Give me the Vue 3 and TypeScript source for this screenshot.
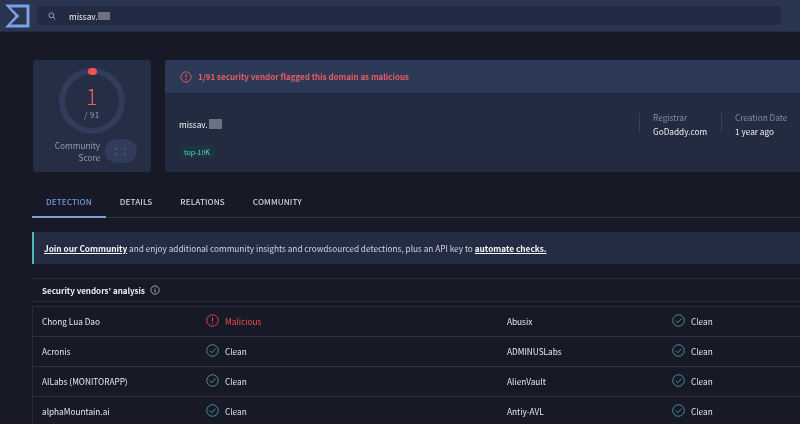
<script setup lang="ts">
interface Vendor { name: string; verdict: string }
const rows: [Vendor, Vendor][] = [
  [{ name: 'Chong Lua Dao', verdict: 'Malicious' }, { name: 'Abusix', verdict: 'Clean' }],
  [{ name: 'Acronis', verdict: 'Clean' }, { name: 'ADMINUSLabs', verdict: 'Clean' }],
  [{ name: 'AILabs (MONITORAPP)', verdict: 'Clean' }, { name: 'AlienVault', verdict: 'Clean' }],
  [{ name: 'alphaMountain.ai', verdict: 'Clean' }, { name: 'Antiy-AVL', verdict: 'Clean' }],
]
const tabs = ['DETECTION', 'DETAILS', 'RELATIONS', 'COMMUNITY']
</script>

<template>
  <div class="page">
    <header class="topbar">
      <svg class="logo" viewBox="0 0 26 24" width="26" height="24">
        <path d="M1 .5H25.500V23.500H1L11.500 12Z M6.500 3.500H22.500V20.500H6.500L15.500 12Z" fill="#7ba2e6" fill-rule="evenodd" />
      </svg>
      <div class="search">
        <svg viewBox="0 0 12 12" width="8" height="8" class="search-icon">
          <circle cx="5" cy="5" r="3.6" fill="none" stroke="#a9b2c4" stroke-width="1.3" />
          <path d="M7.800 7.800L11 11" stroke="#a9b2c4" stroke-width="1.4" />
        </svg>
        <span class="search-text">missav.</span><span class="mask search-mask"></span>
      </div>
    </header>

    <main class="content">
      <section class="summary">
        <div class="score-card">
          <div class="ring">
            <svg viewBox="0 0 66 66" width="66" height="66" class="ring-svg">
              <circle cx="33" cy="33" r="30" fill="none" stroke="#303c59" stroke-width="6" />
              <rect x="29" y="0" width="9" height="7" rx="3.500" fill="#f0524e" />
            </svg>
            <div class="ring-num">1</div>
            <div class="ring-total">/ 91</div>
          </div>
          <div class="community">
            <div class="community-label">Community<br />Score</div>
            <div class="community-pill"><i></i><i></i><i></i><i></i></div>
          </div>
        </div>

        <div class="info-card">
          <div class="alert">
            <svg viewBox="0 0 14 14" width="12" height="12">
              <circle cx="7" cy="7" r="6" fill="none" stroke="#e5545b" stroke-width="1.100" />
              <path d="M7 3.500V8" stroke="#e5545b" stroke-width="1.200" />
              <circle cx="7" cy="10" r=".8" fill="#e5545b" />
            </svg>
            <span>1/91 security vendor flagged this domain as malicious</span>
          </div>
          <div class="info-body">
            <div class="domain-col">
              <div class="domain"><span>missav.</span><span class="mask domain-mask"></span></div>
              <span class="tag">top-10K</span>
            </div>
            <div class="meta-wrap">
              <div class="meta">
                <div class="meta-label">Registrar</div>
                <div class="meta-value">GoDaddy.com</div>
              </div>
              <div class="meta">
                <div class="meta-label">Creation Date</div>
                <div class="meta-value">1 year ago</div>
              </div>
            </div>
          </div>
        </div>
      </section>

      <nav class="tabs">
        <div v-for="(t, i) in tabs" :key="t" class="tab" :class="{ active: i === 0 }">{{ t }}</div>
      </nav>

      <div class="banner">
        <a class="strong">Join our Community</a> and enjoy additional community insights and crowdsourced detections, plus an API key to <a class="strong">automate checks.</a>
      </div>

      <div class="section-head">
        <span>Security vendors' analysis</span>
        <svg viewBox="0 0 12 12" width="10" height="10">
          <circle cx="6" cy="6" r="5" fill="none" stroke="#c9ced8" stroke-width=".9" />
          <path d="M6 5.400V9" stroke="#c9ced8" stroke-width="1" />
          <circle cx="6" cy="3.600" r=".6" fill="#c9ced8" />
        </svg>
      </div>

      <div class="table">
        <div v-for="(row, r) in rows" :key="r" class="row">
          <template v-for="v in row" :key="v.name">
            <div class="vendor">{{ v.name }}</div>
            <div class="verdict" :class="{ bad: v.verdict === 'Malicious' }">
              <svg v-if="v.verdict === 'Malicious'" viewBox="0 0 14 14" width="13" height="13">
                <circle cx="7" cy="7" r="6.200" fill="none" stroke="#e5464e" stroke-width="1" />
                <path d="M7 3.400V8" stroke="#e5464e" stroke-width="1.100" />
                <circle cx="7" cy="10" r=".7" fill="#e5464e" />
              </svg>
              <svg v-else viewBox="0 0 14 14" width="13" height="13">
                <circle cx="7" cy="7" r="6.200" fill="none" stroke="#4f9c98" stroke-width="1" />
                <path d="M4 7.200L6.200 9.400L10.200 5" fill="none" stroke="#4f9c98" stroke-width="1" />
              </svg>
              <span>{{ v.verdict }}</span>
            </div>
          </template>
        </div>
      </div>
    </main>
  </div>
</template>

<style>
html, body { margin: 0; background: #181a28; }
</style>

<style scoped>
.page {
  width: 800px;
  height: 424px;
  overflow: hidden;
  background: #171926;
  color: #e6e8ee;
  font-family: "Noto Sans CJK SC", "Noto Sans", sans-serif;
  font-size: 8.25px;
  filter: blur(.3px);
}
.topbar {
  height: 32px;
  box-sizing: border-box;
  background: #2a3550;
  border-bottom: 1px solid #222a41;
  display: flex;
  align-items: center;
  padding: 0 19px 0 4px;
  gap: 7px;
}
.logo { flex: none; }
.search {
  flex: 1;
  height: 19px;
  background: #222b42;
  border-radius: 3px;
  display: flex;
  align-items: center;
  padding-left: 11px;
  color: #f0f2f6;
  font-size: 8.25px;
}
.search-icon { margin-right: 13px; }
.search-mask { width: 12px; height: 8px; }
.mask { display: inline-block; background: #6b7282; }
.content { padding: 28px 0 0 32px; }
.summary { display: flex; gap: 14px; height: 112px; margin-left: 1px; }
.score-card {
  width: 118px;
  flex: none;
  background: #252e45;
  border-radius: 3px;
  box-sizing: border-box;
  padding-top: 8px;
  display: flex;
  flex-direction: column;
  align-items: center;
}
.ring { width: 66px; height: 66px; position: relative; text-align: center; }
.ring-svg { position: absolute; left: 0; top: 0; }
.ring-num { position: relative; padding-top: 16px; font-size: 22px; line-height: 22px; color: #e8615d; font-weight: 300; }
.ring-total { position: relative; font-size: 8px; line-height: 11px; margin-top: 3px; color: #969db0; letter-spacing: .4px; }
.community { display: flex; align-items: center; margin-top: 5px; margin-left: 8px; gap: 5px; }
.community-label { text-align: right; font-size: 8.25px; line-height: 12px; color: #939bb0; white-space: nowrap; }
.community-pill {
  width: 32px; height: 24px; border-radius: 12px; background: #303c59;
  display: grid; grid-template-columns: 4px 4px; gap: 3px 5px; align-content: center; justify-content: center;
}
.community-pill i { width: 2px; height: 2px; border-radius: 50%; background: #4c5b7c; }
.info-card {
  flex: 1;
  background: #232b40;
  border-radius: 3px 0 0 3px;
  display: flex;
  flex-direction: column;
}
.alert {
  height: 34px;
  flex: none;
  box-sizing: border-box;
  background: #2c3a58;
  border-bottom: 1px solid #202841;
  border-radius: 3px 0 0 0;
  display: flex;
  align-items: center;
  padding-left: 15px;
  gap: 6px;
  color: #ee5a61;
  font-size: 8px;
  font-weight: 700;
}
.info-body { flex: 1; display: flex; justify-content: space-between; }
.domain-col { padding: 23px 0 0 14px; }
.domain { display: flex; align-items: center; font-size: 8.25px; line-height: 14px; color: #f2f4f8; gap: 1px; }
.domain-mask { width: 13px; height: 10px; }
.tag {
  display: inline-block;
  margin-top: 15px;
  padding: 1px 5px;
  border-radius: 3px;
  background: #1a3540;
  color: #5fd3bf;
  font-size: 7px;
  line-height: 10px;
}
.meta-wrap { display: flex; padding-top: 19px; }
.meta { height: 19px; width: 82px; box-sizing: border-box; border-left: 1px solid #38415a; padding-left: 13px; line-height: 14px; }
.meta:last-child { width: 79px; }
.meta-label { font-size: 8.25px; color: #858ea5; white-space: nowrap; margin-top: -3px; }
.meta-value { font-size: 8.25px; color: #f0f2f7; white-space: nowrap; }
.tabs {
  display: flex;
  height: 46px;
  box-sizing: border-box;
  border-bottom: 1px solid #2f3144;
  align-items: flex-end;
}
.tab {
  height: 31px;
  box-sizing: border-box;
  padding: 9px 14px 0;
  font-size: 8.1px;
  line-height: 13px;
  font-weight: 500;
  color: #ccd1dc;
  letter-spacing: .1px;
}
.tab.active {
  color: #7398e0;
  margin-bottom: -1px;
  height: 32px;
  border-bottom: 2px solid #7e9fdc;
}
.banner {
  margin-top: 14px;
  height: 32px;
  box-sizing: border-box;
  background: #232c42;
  border-left: 2px solid #4fb7c4;
  padding-left: 10px;
  display: flex;
  align-items: center;
  white-space: pre-wrap;
  font-size: 8.25px;
  color: #d2d6e0;
}
.strong { color: #f6f7fa; font-weight: 700; text-decoration: underline; }
.section-head {
  margin-top: 14px;
  height: 24px;
  box-sizing: border-box;
  border-top: 1px solid #2a2c3d;
  border-bottom: 1px solid #2a2c3d;
  padding-left: 10px;
  display: flex;
  align-items: center;
  gap: 5px;
  font-size: 8px;
  font-weight: 700;
  color: #eceef3;
}
.table { margin-top: 4px; border-top: 1px solid #2a2c3d; border-left: 1px solid #2a2c3d; }
.row {
  height: 30px;
  box-sizing: border-box;
  padding-bottom: 2px;
  border-bottom: 1px solid #2f3144;
  display: grid;
  grid-template-columns: 173px 292px 174px 1fr;
  align-items: center;
}
.vendor { padding-left: 9px; font-size: 8.25px; color: #e8ebf1; white-space: nowrap; }
.verdict { display: flex; align-items: center; gap: 6px; font-size: 8.25px; color: #e0e3ea; }
.verdict.bad { color: #ee4e56; }
</style>
